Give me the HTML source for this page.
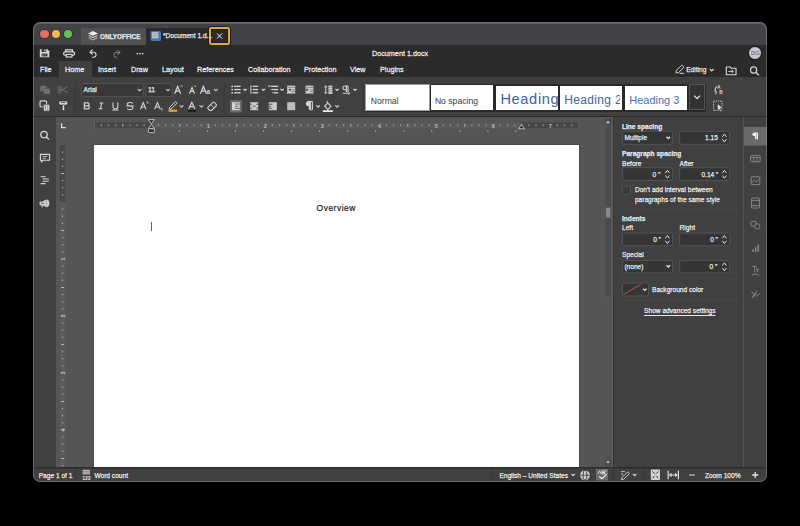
<!DOCTYPE html>
<html><head><meta charset="utf-8">
<style>
*{box-sizing:border-box;margin:0;padding:0}
html,body{width:800px;height:526px;background:#000;overflow:hidden;font-family:"Liberation Sans",sans-serif;}
.a{position:absolute}
#win{position:absolute;left:0;top:0;width:800px;height:526px;clip-path:inset(22px 33px 44px 33px round 7px);}
.t{position:absolute;z-index:2;white-space:nowrap;color:rgba(255,255,255,0.86);line-height:1;-webkit-text-stroke:0.25px currentColor}
.m{font-size:7.9px;transform:scaleX(0.915);transform-origin:0 0;-webkit-text-stroke:0.3px currentColor}
.s{font-size:6.6px;}
.b{font-weight:bold}
.q{word-spacing:-0.2px}
svg{position:absolute;overflow:visible}
</style></head><body>
<div id="win">
  <!-- tab bar -->
  <div class="a" style="left:33px;top:22px;width:734px;height:23px;background:#434247"></div>
  <div class="a" style="left:40.2px;top:29.8px;width:8.4px;height:8.4px;border-radius:50%;background:#ec6a5e;box-shadow:0 0 0 0.6px #1d2b33"></div>
  <div class="a" style="left:52px;top:29.8px;width:8.4px;height:8.4px;border-radius:50%;background:#f4b94a;box-shadow:0 0 0 0.6px #1d2b3a"></div>
  <div class="a" style="left:64.1px;top:29.8px;width:8.4px;height:8.4px;border-radius:50%;background:#5fc653;box-shadow:0 0 0 0.6px #2a1d33"></div>
  <div class="a" style="left:81px;top:28px;width:65px;height:17px;background:#515153"></div>
  <div class="t" style="left:99.8px;top:32.6px;font-size:7.2px;font-weight:bold;color:#e8e8e8;transform:scaleX(0.885);transform-origin:0 0">ONLYOFFICE</div>
  <div class="a" style="left:146px;top:28px;width:85px;height:17px;background:#2b2b2b"></div>
  <div class="a" style="left:151px;top:31px;width:9.5px;height:9.5px;background:#4a78b8;border-radius:1.5px"></div>
  <div class="a" style="left:152.5px;top:32.5px;width:6.5px;height:5.5px;background:#cfcfcf"></div>
  <div class="t s" style="left:163px;top:32.8px;color:#e6e6e6">*Document 1.d...</div>
  <div class="a" style="left:209.2px;top:27.1px;width:20.7px;height:17.6px;border:2px solid #e9a83c;border-radius:2.2px;background:#2a2a2a;box-shadow:0 0 0 0.8px #101a30, inset 0 0 0 0.8px #101a30"></div>

  <!-- title row + menu row -->
  <div class="a" style="left:33px;top:45px;width:734px;height:32px;background:#2b2b2b"></div>
  <div class="t m" style="left:372.3px;top:49.5px">Document 1.docx</div>
  <div class="a" style="left:747.8px;top:46px;width:14.4px;height:14.4px;border-radius:50%;background:#c8c8c8;border:0.9px solid #141414"></div>
  <div class="t" style="left:751px;top:50.9px;font-size:5.8px;color:#5e5e5e;-webkit-text-stroke:0">DG</div>

  <div class="a" style="left:59px;top:61.4px;width:33px;height:15.6px;background:#404040"></div>
  <div class="t m" style="left:40px;top:66.1px">File</div>
  <div class="t m" style="left:65px;top:66.1px">Home</div>
  <div class="t m" style="left:98px;top:66.1px">Insert</div>
  <div class="t m" style="left:131px;top:66.1px">Draw</div>
  <div class="t m" style="left:161.5px;top:66.1px">Layout</div>
  <div class="t m" style="left:197px;top:66.1px">References</div>
  <div class="t m" style="left:248px;top:66.1px">Collaboration</div>
  <div class="t m" style="left:304px;top:66.1px">Protection</div>
  <div class="t m" style="left:350px;top:66.1px">View</div>
  <div class="t m" style="left:380px;top:66.1px">Plugins</div>
  <div class="t s" style="left:686.2px;top:66.8px">Editing</div>

  <!-- toolbar -->
  <div class="a" style="left:33px;top:77px;width:734px;height:40px;background:#404040"></div>
  <div class="a" style="left:33px;top:116.4px;width:734px;height:0.8px;background:#2a2a2a"></div>


  <div class="t s" style="left:83.6px;top:86.8px;color:#e4e4e4">Arial</div>
  <div class="t" style="left:148px;top:86.2px;font-size:7px;color:#e4e4e4">11</div>
  <!-- style gallery -->
  <div class="a" style="left:364.5px;top:84px;width:341px;height:27.6px;background:#2a2a2a"></div>
  <div class="a" style="left:365px;top:84.4px;width:64.6px;height:27px;background:#fff;border:1.2px solid #9a9a9a"></div>
  <div class="a" style="left:430.6px;top:85.3px;width:62.8px;height:24.8px;background:#fff"></div>
  <div class="a" style="left:495.6px;top:86.1px;width:62.3px;height:24px;background:#fff;overflow:hidden"><div class="t" style="left:4.8px;top:6px;font-size:14.6px;letter-spacing:0.65px;color:#3d63a6;-webkit-text-stroke:0">Heading 1</div></div>
  <div class="a" style="left:560.4px;top:86.1px;width:61.7px;height:24px;background:#fff"></div><div class="a" style="left:560.4px;top:86.1px;width:59.4px;height:24px;overflow:hidden"><div class="t" style="left:3.8px;top:8.2px;font-size:12px;letter-spacing:0.36px;color:#3d63a6;-webkit-text-stroke:0">Heading 2</div></div>
  <div class="a" style="left:624.8px;top:85.5px;width:62px;height:24.3px;background:#fff;overflow:hidden"><div class="t" style="left:4.5px;top:9px;font-size:10.96px;color:#4470b4;-webkit-text-stroke:0">Heading 3</div></div>
  <div class="a" style="left:689px;top:84.3px;width:16.2px;height:26px;background:#333;border:0.8px solid #555"></div>
  <div class="t" style="left:370.8px;top:97.2px;font-size:8.6px;color:#3a3a3a;-webkit-text-stroke:0">Normal</div>
  <div class="t" style="left:434.9px;top:97.2px;font-size:8.64px;color:#3a3a3a;-webkit-text-stroke:0">No spacing</div>
  <!-- left panel -->
  <div class="a" style="left:33px;top:117px;width:23px;height:350px;background:#404040"></div>
  <!-- canvas -->
  <div class="a" style="left:56px;top:117px;width:557px;height:350px;background:#555"></div>
  <div class="a" style="left:94px;top:145px;width:485px;height:322px;background:#fff;box-shadow:0 0 0 0.8px #4a4a4a"></div>
  <div class="t" style="left:316.6px;top:203.8px;font-size:8.4px;color:#1a1a1a;-webkit-text-stroke:0.2px #1a1a1a;letter-spacing:0.55px">Overview</div>
  <div class="a" style="left:151px;top:222px;width:1.4px;height:9px;background:#666"></div>

  <!-- right panel -->
  <div class="a" style="left:613px;top:117px;width:131px;height:350px;background:#404040"></div>
  <div class="a" style="left:744px;top:117px;width:23px;height:350px;background:#404040"></div>


  <!-- right panel texts -->
  <div class="t s b" style="left:621.9px;top:124.0px">Line spacing</div>
  <div class="t s" style="left:624.4px;top:135.2px">Multiple</div>
  <div class="t s" style="left:705px;top:135.2px">1.15</div>
  <div class="t s b" style="left:622px;top:151.0px">Paragraph spacing</div>
  <div class="t s" style="left:622px;top:160.6px">Before</div>
  <div class="t s" style="left:679.6px;top:160.6px">After</div>
  <div class="t s q" style="left:652.6px;top:171.8px">0 "</div>
  <div class="t s q" style="left:701.4px;top:171.8px">0.14 "</div>
  <div class="t s" style="left:634.9px;top:187.4px">Don't add interval between</div>
  <div class="t s" style="left:634.9px;top:197.2px">paragraphs of the same style</div>
  <div class="t s b" style="left:622px;top:216.2px">Indents</div>
  <div class="t s" style="left:622px;top:225.4px">Left</div>
  <div class="t s" style="left:679.6px;top:225.4px">Right</div>
  <div class="t s q" style="left:653.2px;top:237.2px">0 "</div>
  <div class="t s q" style="left:710.2px;top:237.2px">0 "</div>
  <div class="t s" style="left:622px;top:252.0px">Special</div>
  <div class="t s" style="left:624.4px;top:264.4px">(none)</div>
  <div class="t s q" style="left:709.6px;top:264.4px">0 "</div>
  <div class="t s" style="left:652px;top:287.4px">Background color</div>
  <div class="t s" style="left:644.1px;top:308.2px;text-decoration:underline;text-underline-offset:2px">Show advanced settings</div>
  <!-- status bar -->
  <div class="a" style="left:33px;top:467px;width:734px;height:15px;background:#404040"></div>
  <div class="t s" style="left:38.7px;top:472.7px">Page 1 of 1</div>
  <div class="t s" style="left:94.4px;top:472.7px">Word count</div>
  <div class="t s" style="left:499.4px;top:472.7px">English – United States</div>
  <div class="t s" style="left:705px;top:472.7px">Zoom 100%</div>

<svg class="a" style="left:0;top:0;z-index:1" width="800" height="526" viewBox="0 0 800 526">
<g id="tabicons">
  <path d="M93 31 L98 33.4 L93 35.8 L88 33.4Z" fill="#ececec"/>
  <path d="M89.2 35.2 L93 37 L96.8 35.2 L98 35.8 L93 38.2 L88 35.8Z" fill="#d0d0d0"/>
  <path d="M89.2 37.6 L93 39.4 L96.8 37.6 L98 38.1 L93 40.5 L88 38.1Z" fill="#b8b8b8"/>
  <rect x="150.6" y="31" width="9" height="9.5" rx="1.2" fill="#3f74c0"/>
  <rect x="151.8" y="32.2" width="6.6" height="6.2" fill="#c9c9c9"/>
  <path d="M152.3 33.8H157.9M152.3 35.3H157.9M152.3 36.8H157.9" stroke="#8a8a8a" stroke-width="0.5"/>
  <path d="M217 33.4L222.1 38.5M222.1 33.4L217 38.5" stroke="#f4f4f4" stroke-width="0.95"/>
</g>
<g id="titleicons" fill="none" stroke="#dcdcdc">
  <path d="M39.8 49.3H47.3L49.3 51.3V57.2H39.8Z" fill="#d8d8d8" stroke="none"/>
  <rect x="41.6" y="49.3" width="4.6" height="2.6" fill="#2b2b2b" stroke="none"/>
  <rect x="44.3" y="49.8" width="1.2" height="1.7" fill="#d8d8d8" stroke="none"/>
  <rect x="41.6" y="53.6" width="5.8" height="2.8" fill="#2b2b2b" stroke="none"/>
  <rect x="42.4" y="54.4" width="1" height="1.1" fill="#d8d8d8" stroke="none"/>
  <rect x="44.6" y="54.4" width="1" height="1.1" fill="#d8d8d8" stroke="none"/>
  <path d="M65.5 52V49.9H72.5V52" stroke-width="1.1"/>
  <rect x="63.6" y="51.8" width="11" height="3.6" rx="1.8" stroke-width="1.2"/>
  <rect x="66.2" y="54.4" width="5.8" height="2.6" stroke-width="1.1" fill="#2d2d2d"/>
  <path d="M92.6 49.7L90 52.2L92.6 54.6" stroke-width="1.1"/>
  <path d="M90.2 52.2H94.2A2.6 2.6 0 0 1 94.2 57.2H92.2" stroke-width="1.1"/>
  <path d="M117.3 49.9L119.9 52.4L117.3 54.9" stroke="#7a7a7a" stroke-width="1.1"/>
  <path d="M119.6 52.4H115.6A2.6 2.6 0 0 0 115.6 57.3H117.2" stroke="#7a7a7a" stroke-width="1.1"/>
  <circle cx="137.4" cy="53.6" r="0.85" fill="#d8d8d8" stroke="none"/>
  <circle cx="140" cy="53.6" r="0.85" fill="#d8d8d8" stroke="none"/>
  <circle cx="142.6" cy="53.6" r="0.85" fill="#d8d8d8" stroke="none"/>
</g>
<g id="menuicons" fill="none" stroke="#d8d8d8" stroke-width="1">
  <path d="M676 72.8L676.4 70.4L681.2 65.6A1 1 0 0 1 682.6 65.6L683.4 66.4A1 1 0 0 1 683.4 67.8L678.6 72.6Z"/>
  <path d="M679.5 73.3H684" />
  <path d="M709.8 69L711.7 70.9L713.6 69" stroke-width="1.1"/>
  <path d="M726.3 67H730.2L731.2 68.2H736V74.7H726.3Z" stroke-width="1.1"/>
  <path d="M728.4 71.4H733.2M731.6 69.8L733.3 71.4L731.6 73" stroke-width="1"/>
  <circle cx="753.6" cy="70" r="3.1" stroke-width="1.2"/>
  <path d="M755.9 72.3L758.9 75.2" stroke-width="1.3"/>
</g>

<g id="toolbar" fill="none" stroke="#d4d4d4" stroke-width="1">
  <!-- separators -->
  <path d="M75 83V113M224 83V113M363 83V113" stroke="#363636" stroke-width="0.8"/>
  <!-- copy (dim) -->
  <rect x="40.2" y="85.8" width="6.4" height="5.6" rx="1.2" fill="#6e6e6e" stroke="none"/>
  <rect x="43.4" y="88.4" width="6.6" height="5.8" rx="1.2" fill="#7a7a7a" stroke="#404040" stroke-width="0.6"/>
  <path d="M45.6 89.5V93.2M47.8 89.5V93.2" stroke="#5a5a5a" stroke-width="0.6"/>
  <!-- cut (dim) -->
  <circle cx="59.6" cy="87.8" r="1.5" stroke="#7c7c7c" stroke-width="0.8"/>
  <circle cx="59.6" cy="91.6" r="1.5" stroke="#7c7c7c" stroke-width="0.8"/>
  <path d="M60.9 88.6L67.6 92.8M60.9 90.8L67.6 86.4" stroke="#7c7c7c" stroke-width="0.8"/>
  <!-- paste -->
  <rect x="40" y="100.8" width="6.6" height="6.2" rx="1.4" stroke="#d4d4d4" stroke-width="1.2" fill="#404040"/>
  <rect x="43.3" y="104.2" width="6.6" height="7" rx="1.2" fill="#cfcfcf" stroke="#1e1e1e" stroke-width="0.6"/>
  <path d="M45.5 105.4V110M47.7 105.4V110" stroke="#7a7a7a" stroke-width="0.6"/>
  <!-- format painter -->
  <rect x="58.8" y="100.9" width="9" height="4.2" rx="2" fill="#d6d6d6" stroke="#1e1e1e" stroke-width="0.5"/>
  <path d="M61 102.4H65.6" stroke="#333" stroke-width="0.8"/>
  <rect x="62.3" y="105" width="2.2" height="5.4" fill="#e0e0e0" stroke="#1e1e1e" stroke-width="0.4"/>
  <!-- font combos -->
  <rect x="81.4" y="83.5" width="62" height="13" rx="1.8" fill="#383838" stroke="#575757" stroke-width="0.8"/>
  <path d="M137.8 89.1L139.6 90.8L141.4 89.1" stroke-width="1.1"/>
  <rect x="145.8" y="83.5" width="26.2" height="13" rx="1.8" fill="#383838" stroke="#575757" stroke-width="0.8"/>
  <path d="M166.2 89.1L168 90.8L169.8 89.1" stroke-width="1.1"/>
  <!-- grow/shrink font -->
  <path d="M174.6 93.8L177.6 86.4L180.6 93.8M175.8 91.2H179.4" stroke-width="1.2"/>
  <path d="M180.4 86.6L181.4 85.4L182.4 86.6" stroke-width="0.8"/>
  <path d="M189.4 93.8L192 87.4L194.6 93.8M190.4 91.4H193.6" stroke-width="1.1"/>
  <path d="M194.2 85.6L195.2 86.8L196.2 85.6" stroke-width="0.8"/>
  <!-- change case -->
  <path d="M200.4 93.8L203.4 86.4L206.4 93.8M201.6 91.2H205.2" stroke-width="1.2"/>
  <text x="206.6" y="93.8" font-size="6.4" font-family="Liberation Sans" font-weight="bold" fill="#d4d4d4" stroke="none">a</text>
  <path d="M214.2 89.1L215.9 90.8L217.6 89.1" stroke-width="1.1"/>
  <!-- row 2 -->
  <path d="M84.4 102.8H87.4A1.6 1.5 0 0 1 87.4 105.8H84.4ZM84.4 105.8H87.8A1.6 1.55 0 0 1 87.8 108.9H84.4Z" stroke-width="1.2"/>
  <path d="M99.4 103H103.4M98.6 108.8H102.6M101.6 103L100.4 108.8" stroke-width="1.1"/>
  <path d="M113 102.6V106.4A2.4 2.4 0 0 0 117.8 106.4V102.6M112.2 110H118.6" stroke-width="1.1"/>
  <path d="M132.8 103.6A2.6 1.4 0 0 0 127.4 104.4C127.4 106.2 132.8 105.6 132.8 107.6A2.6 1.4 0 0 1 127.2 108.4M126.2 106H134" stroke-width="1.05"/>
  <path d="M140.4 109.2L143.2 102.6L146 109.2M141.4 107H145" stroke-width="1.1"/>
  <path d="M146.4 101.8H147.8V104" stroke-width="0.7"/>
  <path d="M154.6 109.2L157.4 102.6L160.2 109.2M155.6 107H159.2" stroke-width="1.1"/>
  <path d="M160.6 108.4H162V111" stroke-width="0.7"/>
  <!-- highlight -->
  <path d="M169.4 107.6L175.4 101.6L177 103.2L171 109.2H169.4Z" stroke-width="1"/>
  <rect x="168.6" y="109.6" width="8.4" height="2.2" fill="#e2a73b" stroke="none"/>
  <path d="M179.8 105.4L181.6 107.1L183.4 105.4" stroke-width="1.1"/>
  <!-- font color -->
  <path d="M188.6 109L191.8 102.4L195 109M189.8 106.6H193.8" stroke-width="1.15"/>
  <rect x="188" y="110.2" width="8" height="1.4" fill="#111" stroke="none"/>
  <path d="M199.6 105.4L201.4 107.1L203.2 105.4" stroke-width="1.1"/>
  <!-- eraser -->
  <path d="M207.8 107.4L212.8 102.4A1 1 0 0 1 214.2 102.4L216.2 104.4A1 1 0 0 1 216.2 105.8L211.6 110.4H209.8L207.8 108.4Z" stroke-width="1.05"/>
  <path d="M210.8 104.6L213.8 107.6" stroke-width="0.9"/>
  <!-- lists -->
  <g fill="#d6d6d6" stroke="none">
    <circle cx="232.2" cy="86.4" r="0.9"/><circle cx="232.2" cy="89.6" r="0.9"/><circle cx="232.2" cy="92.8" r="0.9"/>
    <rect x="234.2" y="85.7" width="6.4" height="1.3"/><rect x="234.2" y="88.9" width="6.4" height="1.3"/><rect x="234.2" y="92.1" width="6.4" height="1.3"/>
    <rect x="250.4" y="85.2" width="1" height="8.6"/>
    <rect x="252.6" y="85.7" width="5.6" height="1.3"/><rect x="252.6" y="88.9" width="5.6" height="1.3"/><rect x="252.6" y="92.1" width="5.6" height="1.3"/>
    <rect x="268.6" y="85" width="1" height="2.2"/>
    <rect x="270.6" y="85.7" width="7.6" height="1.3"/><rect x="272.2" y="88.9" width="6" height="1.3"/><rect x="273.6" y="92.1" width="4.6" height="1.3"/>
    <rect x="270.8" y="89" width="1" height="1"/><rect x="272.2" y="92.2" width="1" height="1"/>
  </g>
  <path d="M243.4 88.8L245.1 90.5L246.8 88.8M261.8 88.8L263.5 90.5L265.2 88.8M280.4 88.8L282.1 90.5L283.8 88.8" stroke-width="1.1"/>
  <!-- indents -->
  <rect x="287.2" y="85.6" width="8" height="8.4" fill="#cdcdcd" stroke="none"/>
  <path d="M288 87.4H295M291.4 89.7H295M291.4 91.6H295M288 93.5H295" stroke="#4a4a4a" stroke-width="0.5"/>
  <path d="M290.6 88.4L288.2 89.8L290.6 91.2Z" fill="#333" stroke="none"/>
  <rect x="305.6" y="85.6" width="7.8" height="8.4" fill="#cdcdcd" stroke="none"/>
  <path d="M306.4 87.4H313.2M309.8 89.7H313.2M309.8 91.6H313.2M306.4 93.5H313.2" stroke="#4a4a4a" stroke-width="0.5"/>
  <path d="M306.4 88.4L308.8 89.8L306.4 91.2Z" fill="#333" stroke="none"/>
  <!-- line spacing -->
  <path d="M325.8 85.8V93.8M324.4 87.2L325.8 85.8L327.2 87.2M324.4 92.4L325.8 93.8L327.2 92.4" stroke-width="1"/>
  <rect x="328.4" y="85.6" width="4" height="8.4" fill="#cdcdcd" stroke="none"/>
  <path d="M328.4 87.4H332.4M328.4 89.7H332.4M328.4 91.8H332.4" stroke="#555" stroke-width="0.5"/>
  <path d="M335.4 88.8L337.1 90.5L338.8 88.8" stroke-width="1.1"/>
  <!-- paragraph spacing -->
  <path d="M348 86H344.8A1.9 1.9 0 0 0 344.8 89.8H346M346.4 86V92.2M348 86V92.2" stroke-width="1.1"/>
  <path d="M342.6 93.3H349.2M348.2 91.8L349.8 93.3L348.2 94.8" stroke-width="0.9"/>
  <path d="M353.4 88.8L355.1 90.5L356.8 88.8" stroke-width="1.1"/>
  <!-- align -->
  <rect x="230" y="100" width="11.8" height="12.4" rx="1" fill="#6a6a6a" stroke="none"/>
  <rect x="232" y="102.2" width="7.8" height="8" fill="#d0d0d0" stroke="none"/>
  <path d="M235 104H239.8M235 106.2H238.2M235 108.4H239.8" stroke="#444" stroke-width="0.7"/>
  <rect x="250.2" y="102.2" width="8" height="8" fill="#cbcbcb" stroke="none"/>
  <path d="M250.2 104.2H252.2M256.2 104.2H258.2M250.2 108.2H252.2M256.2 108.2H258.2M252.8 106.2H255.6" stroke="#3a3a3a" stroke-width="0.8"/>
  <rect x="268.8" y="102.2" width="8" height="8" fill="#cbcbcb" stroke="none"/>
  <path d="M268.8 104.2H272.4M268.8 106.2H271M268.8 108.2H272.4" stroke="#3a3a3a" stroke-width="0.8"/>
  <rect x="287.2" y="102.2" width="8" height="8" fill="#bdbdbd" stroke="none"/>
  <!-- pilcrow -->
  <path d="M307.4 101.4H312.4V109.8H310.6V101.4" fill="none" stroke-width="1"/>
  <path d="M309.8 101.4H308.2A2.4 2.4 0 0 0 308.2 106.2H309.8Z" fill="#d4d4d4" stroke="none"/>
  <rect x="308.8" y="101.4" width="1.4" height="8.4" fill="#d4d4d4" stroke="none"/>
  <path d="M316.4 105.4L318.1 107.1L319.8 105.4" stroke-width="1.1"/>
  <!-- shading -->
  <path d="M324.6 106.2L327.8 103L331 106.2L327.8 109.4Z" stroke-width="1.1"/>
  <path d="M326 102.2L328 101.4" stroke-width="0.9"/>
  <rect x="322.8" y="110.2" width="10" height="1.8" fill="#e8e8e8" stroke="none"/>
  <path d="M335.4 105.4L337.1 107.1L338.8 105.4" stroke-width="1.1"/>
</g>
<g id="hruler">
<rect x="94.5" y="122.4" width="483.5" height="5.8" fill="#5a5a5a"/>
<rect x="94.2" y="122.4" width="0.8" height="5.8" fill="#8a8a8a"/>
<rect x="94.5" y="122.4" width="56.80" height="5.8" fill="#474747"/>
<rect x="521.8" y="122.4" width="56.20" height="5.8" fill="#474747"/>
<rect x="100.73" y="124.6" width="1.3" height="1.3" fill="#a8a8a8"/>
<rect x="107.85" y="124.6" width="1.3" height="1.3" fill="#a8a8a8"/>
<rect x="114.98" y="124.6" width="1.3" height="1.3" fill="#a8a8a8"/>
<rect x="122.30" y="123.9" width="1" height="2.8" fill="#b8b8b8"/>
<rect x="129.23" y="124.6" width="1.3" height="1.3" fill="#a8a8a8"/>
<rect x="136.35" y="124.6" width="1.3" height="1.3" fill="#a8a8a8"/>
<rect x="143.48" y="124.6" width="1.3" height="1.3" fill="#a8a8a8"/>
<rect x="157.73" y="124.6" width="1.3" height="1.3" fill="#a8a8a8"/>
<rect x="164.85" y="124.6" width="1.3" height="1.3" fill="#a8a8a8"/>
<rect x="171.98" y="124.6" width="1.3" height="1.3" fill="#a8a8a8"/>
<rect x="179.30" y="123.9" width="1" height="2.8" fill="#b8b8b8"/>
<rect x="186.23" y="124.6" width="1.3" height="1.3" fill="#a8a8a8"/>
<rect x="193.35" y="124.6" width="1.3" height="1.3" fill="#a8a8a8"/>
<rect x="200.48" y="124.6" width="1.3" height="1.3" fill="#a8a8a8"/>
<text x="208.30" y="127.6" font-size="5.6" fill="#bdbdbd" text-anchor="middle" font-family="Liberation Sans" font-weight="bold">1</text>
<rect x="214.73" y="124.6" width="1.3" height="1.3" fill="#a8a8a8"/>
<rect x="221.85" y="124.6" width="1.3" height="1.3" fill="#a8a8a8"/>
<rect x="228.98" y="124.6" width="1.3" height="1.3" fill="#a8a8a8"/>
<rect x="236.30" y="123.9" width="1" height="2.8" fill="#b8b8b8"/>
<rect x="243.23" y="124.6" width="1.3" height="1.3" fill="#a8a8a8"/>
<rect x="250.35" y="124.6" width="1.3" height="1.3" fill="#a8a8a8"/>
<rect x="257.48" y="124.6" width="1.3" height="1.3" fill="#a8a8a8"/>
<text x="265.30" y="127.6" font-size="5.6" fill="#bdbdbd" text-anchor="middle" font-family="Liberation Sans" font-weight="bold">2</text>
<rect x="271.73" y="124.6" width="1.3" height="1.3" fill="#a8a8a8"/>
<rect x="278.85" y="124.6" width="1.3" height="1.3" fill="#a8a8a8"/>
<rect x="285.98" y="124.6" width="1.3" height="1.3" fill="#a8a8a8"/>
<rect x="293.30" y="123.9" width="1" height="2.8" fill="#b8b8b8"/>
<rect x="300.23" y="124.6" width="1.3" height="1.3" fill="#a8a8a8"/>
<rect x="307.35" y="124.6" width="1.3" height="1.3" fill="#a8a8a8"/>
<rect x="314.48" y="124.6" width="1.3" height="1.3" fill="#a8a8a8"/>
<text x="322.30" y="127.6" font-size="5.6" fill="#bdbdbd" text-anchor="middle" font-family="Liberation Sans" font-weight="bold">3</text>
<rect x="328.73" y="124.6" width="1.3" height="1.3" fill="#a8a8a8"/>
<rect x="335.85" y="124.6" width="1.3" height="1.3" fill="#a8a8a8"/>
<rect x="342.98" y="124.6" width="1.3" height="1.3" fill="#a8a8a8"/>
<rect x="350.30" y="123.9" width="1" height="2.8" fill="#b8b8b8"/>
<rect x="357.23" y="124.6" width="1.3" height="1.3" fill="#a8a8a8"/>
<rect x="364.35" y="124.6" width="1.3" height="1.3" fill="#a8a8a8"/>
<rect x="371.48" y="124.6" width="1.3" height="1.3" fill="#a8a8a8"/>
<text x="379.30" y="127.6" font-size="5.6" fill="#bdbdbd" text-anchor="middle" font-family="Liberation Sans" font-weight="bold">4</text>
<rect x="385.73" y="124.6" width="1.3" height="1.3" fill="#a8a8a8"/>
<rect x="392.85" y="124.6" width="1.3" height="1.3" fill="#a8a8a8"/>
<rect x="399.98" y="124.6" width="1.3" height="1.3" fill="#a8a8a8"/>
<rect x="407.30" y="123.9" width="1" height="2.8" fill="#b8b8b8"/>
<rect x="414.23" y="124.6" width="1.3" height="1.3" fill="#a8a8a8"/>
<rect x="421.35" y="124.6" width="1.3" height="1.3" fill="#a8a8a8"/>
<rect x="428.48" y="124.6" width="1.3" height="1.3" fill="#a8a8a8"/>
<text x="436.30" y="127.6" font-size="5.6" fill="#bdbdbd" text-anchor="middle" font-family="Liberation Sans" font-weight="bold">5</text>
<rect x="442.73" y="124.6" width="1.3" height="1.3" fill="#a8a8a8"/>
<rect x="449.85" y="124.6" width="1.3" height="1.3" fill="#a8a8a8"/>
<rect x="456.98" y="124.6" width="1.3" height="1.3" fill="#a8a8a8"/>
<rect x="464.30" y="123.9" width="1" height="2.8" fill="#b8b8b8"/>
<rect x="471.23" y="124.6" width="1.3" height="1.3" fill="#a8a8a8"/>
<rect x="478.35" y="124.6" width="1.3" height="1.3" fill="#a8a8a8"/>
<rect x="485.48" y="124.6" width="1.3" height="1.3" fill="#a8a8a8"/>
<text x="493.30" y="127.6" font-size="5.6" fill="#bdbdbd" text-anchor="middle" font-family="Liberation Sans" font-weight="bold">6</text>
<rect x="499.73" y="124.6" width="1.3" height="1.3" fill="#a8a8a8"/>
<rect x="506.85" y="124.6" width="1.3" height="1.3" fill="#a8a8a8"/>
<rect x="513.97" y="124.6" width="1.3" height="1.3" fill="#a8a8a8"/>
<rect x="521.30" y="123.9" width="1" height="2.8" fill="#b8b8b8"/>
<rect x="528.22" y="124.6" width="1.3" height="1.3" fill="#a8a8a8"/>
<rect x="535.35" y="124.6" width="1.3" height="1.3" fill="#a8a8a8"/>
<rect x="542.47" y="124.6" width="1.3" height="1.3" fill="#a8a8a8"/>
<text x="550.30" y="127.6" font-size="5.6" fill="#bdbdbd" text-anchor="middle" font-family="Liberation Sans" font-weight="bold">7</text>
<rect x="556.72" y="124.6" width="1.3" height="1.3" fill="#a8a8a8"/>
<rect x="563.85" y="124.6" width="1.3" height="1.3" fill="#a8a8a8"/>
<rect x="570.97" y="124.6" width="1.3" height="1.3" fill="#a8a8a8"/>
<rect x="178.85" y="130.4" width="1" height="1.6" fill="#b0b0b0"/>
<rect x="206.90" y="130.4" width="1" height="1.6" fill="#b0b0b0"/>
<rect x="234.95" y="130.4" width="1" height="1.6" fill="#b0b0b0"/>
<rect x="263.00" y="130.4" width="1" height="1.6" fill="#b0b0b0"/>
<rect x="291.05" y="130.4" width="1" height="1.6" fill="#b0b0b0"/>
<rect x="319.10" y="130.4" width="1" height="1.6" fill="#b0b0b0"/>
<rect x="347.15" y="130.4" width="1" height="1.6" fill="#b0b0b0"/>
<rect x="375.20" y="130.4" width="1" height="1.6" fill="#b0b0b0"/>
<rect x="403.25" y="130.4" width="1" height="1.6" fill="#b0b0b0"/>
<rect x="431.30" y="130.4" width="1" height="1.6" fill="#b0b0b0"/>
<rect x="459.35" y="130.4" width="1" height="1.6" fill="#b0b0b0"/>
<rect x="487.40" y="130.4" width="1" height="1.6" fill="#b0b0b0"/>
<rect x="515.45" y="130.4" width="1" height="1.6" fill="#b0b0b0"/>
<path d="M148.4 119.6H154.4L151.4 123.8Z" fill="#2e2e2e" stroke="#c4c4c4" stroke-width="0.9"/>
<path d="M151.4 124.6L154.4 128.4H148.4Z" fill="#2e2e2e" stroke="#c4c4c4" stroke-width="0.9"/>
<rect x="148.4" y="128.8" width="6" height="3.8" rx="0.6" fill="#2e2e2e" stroke="#c4c4c4" stroke-width="0.9"/>
<path d="M521.6 124.6L524.6 128.8H518.6Z" fill="#2e2e2e" stroke="#c4c4c4" stroke-width="0.9"/>
<path d="M61 123.2V128.2H65.6V127H62.2V123.2Z" fill="#e0e0e0"/>
</g>
<g id="vruler">
<rect x="59.8" y="145.3" width="5.6" height="321.7" fill="#5a5a5a"/>
<rect x="59.8" y="145.3" width="5.6" height="56.70" fill="#474747"/>
<rect x="61.9" y="151.42" width="1.3" height="1.3" fill="#a8a8a8"/>
<rect x="61.9" y="158.55" width="1.3" height="1.3" fill="#a8a8a8"/>
<rect x="61.9" y="165.68" width="1.3" height="1.3" fill="#a8a8a8"/>
<rect x="61.2" y="173.00" width="2.8" height="1" fill="#b8b8b8"/>
<rect x="61.9" y="179.92" width="1.3" height="1.3" fill="#a8a8a8"/>
<rect x="61.9" y="187.05" width="1.3" height="1.3" fill="#a8a8a8"/>
<rect x="61.9" y="194.18" width="1.3" height="1.3" fill="#a8a8a8"/>
<rect x="61.9" y="208.42" width="1.3" height="1.3" fill="#a8a8a8"/>
<rect x="61.9" y="215.55" width="1.3" height="1.3" fill="#a8a8a8"/>
<rect x="61.9" y="222.68" width="1.3" height="1.3" fill="#a8a8a8"/>
<rect x="61.2" y="230.00" width="2.8" height="1" fill="#b8b8b8"/>
<rect x="61.9" y="236.92" width="1.3" height="1.3" fill="#a8a8a8"/>
<rect x="61.9" y="244.05" width="1.3" height="1.3" fill="#a8a8a8"/>
<rect x="61.9" y="251.18" width="1.3" height="1.3" fill="#a8a8a8"/>
<text transform="translate(62.6 259.00) rotate(-90)" font-size="5.5" fill="#c8c8c8" text-anchor="middle" dy="2" font-family="Liberation Sans" font-weight="bold">1</text>
<rect x="61.9" y="265.42" width="1.3" height="1.3" fill="#a8a8a8"/>
<rect x="61.9" y="272.55" width="1.3" height="1.3" fill="#a8a8a8"/>
<rect x="61.9" y="279.68" width="1.3" height="1.3" fill="#a8a8a8"/>
<rect x="61.2" y="287.00" width="2.8" height="1" fill="#b8b8b8"/>
<rect x="61.9" y="293.92" width="1.3" height="1.3" fill="#a8a8a8"/>
<rect x="61.9" y="301.05" width="1.3" height="1.3" fill="#a8a8a8"/>
<rect x="61.9" y="308.18" width="1.3" height="1.3" fill="#a8a8a8"/>
<text transform="translate(62.6 316.00) rotate(-90)" font-size="5.5" fill="#c8c8c8" text-anchor="middle" dy="2" font-family="Liberation Sans" font-weight="bold">2</text>
<rect x="61.9" y="322.42" width="1.3" height="1.3" fill="#a8a8a8"/>
<rect x="61.9" y="329.55" width="1.3" height="1.3" fill="#a8a8a8"/>
<rect x="61.9" y="336.68" width="1.3" height="1.3" fill="#a8a8a8"/>
<rect x="61.2" y="344.00" width="2.8" height="1" fill="#b8b8b8"/>
<rect x="61.9" y="350.92" width="1.3" height="1.3" fill="#a8a8a8"/>
<rect x="61.9" y="358.05" width="1.3" height="1.3" fill="#a8a8a8"/>
<rect x="61.9" y="365.18" width="1.3" height="1.3" fill="#a8a8a8"/>
<text transform="translate(62.6 373.00) rotate(-90)" font-size="5.5" fill="#c8c8c8" text-anchor="middle" dy="2" font-family="Liberation Sans" font-weight="bold">3</text>
<rect x="61.9" y="379.42" width="1.3" height="1.3" fill="#a8a8a8"/>
<rect x="61.9" y="386.55" width="1.3" height="1.3" fill="#a8a8a8"/>
<rect x="61.9" y="393.68" width="1.3" height="1.3" fill="#a8a8a8"/>
<rect x="61.2" y="401.00" width="2.8" height="1" fill="#b8b8b8"/>
<rect x="61.9" y="407.92" width="1.3" height="1.3" fill="#a8a8a8"/>
<rect x="61.9" y="415.05" width="1.3" height="1.3" fill="#a8a8a8"/>
<rect x="61.9" y="422.18" width="1.3" height="1.3" fill="#a8a8a8"/>
<text transform="translate(62.6 430.00) rotate(-90)" font-size="5.5" fill="#c8c8c8" text-anchor="middle" dy="2" font-family="Liberation Sans" font-weight="bold">4</text>
<rect x="61.9" y="436.42" width="1.3" height="1.3" fill="#a8a8a8"/>
<rect x="61.9" y="443.55" width="1.3" height="1.3" fill="#a8a8a8"/>
<rect x="61.9" y="450.68" width="1.3" height="1.3" fill="#a8a8a8"/>
<rect x="61.2" y="458.00" width="2.8" height="1" fill="#b8b8b8"/>
<rect x="61.9" y="464.92" width="1.3" height="1.3" fill="#a8a8a8"/>
</g>

<g id="leftpanel" fill="none" stroke="#d6d6d6">
  <circle cx="44" cy="134.6" r="3.2" stroke-width="1.3"/>
  <path d="M46.4 137L49 139.6" stroke-width="1.4"/>
  <path d="M40.4 154.4H49.6V160.2H43.4L41.4 162V160.2H40.4Z" stroke-width="1.1" stroke-linejoin="round"/>
  <path d="M42.6 156.4H47.4M42.6 158.2H45.8" stroke-width="0.8"/>
  <path d="M40.6 176.8H45.6M42.6 179H48.8M42.6 181.2H48.8M40.6 183.6H45.6" stroke-width="1.1"/>
  <path d="M39.6 201.4H42.2L46.4 199.4C48.6 199.4 49.4 201.4 49.4 203.3C49.4 205.3 48.6 207.3 46.4 207.3L42.2 205.3H39.6Z" fill="#d0d0d0" stroke="none"/>
  <path d="M41 203.3H44.2" stroke="#444" stroke-width="0.8"/>
  <path d="M46.4 199.8V206.9" stroke="#8a8a8a" stroke-width="0.6"/>
  <path d="M41.6 205.2L42.4 207.4" stroke-width="1.1"/>
</g>
<g id="scroll">
  <rect x="604.8" y="118.8" width="6.4" height="6.4" fill="#4a4a4a"/>
  <path d="M606 123.2L608 120.8L610 123.2Z" fill="#d0d0d0"/>
  <rect x="604.4" y="126.4" width="7.2" height="170" fill="#5a5a5a"/>
  <rect x="605.2" y="127" width="5.8" height="169" fill="#4b4b4b"/>
  <rect x="605.8" y="207.4" width="4.8" height="10.4" rx="0.6" fill="#8a8a8a" stroke="#555" stroke-width="0.5"/>
  <rect x="743" y="117" width="1" height="350" fill="#545454"/>
  <rect x="612.2" y="117" width="0.9" height="350" fill="#5e5e5e"/>
  <rect x="613.1" y="117" width="0.9" height="350" fill="#363636"/>
  <rect x="604.8" y="459.4" width="6.4" height="6.4" fill="#4a4a4a"/>
  <path d="M606 461.2L608 463.6L610 461.2Z" fill="#d0d0d0"/>
</g>
<g id="rightbar" fill="none" stroke="#8c8c8c" stroke-width="0.9">
  <rect x="744" y="127" width="22.8" height="18.4" fill="#6b6b6b" stroke="none"/>
  <path d="M755.4 132.4H758V139.2H756.6V132.4" fill="#f0f0f0" stroke="none"/>
  <path d="M755.6 132.4H754.4A1.9 1.9 0 0 0 754.4 136.2H755.6Z" fill="#f0f0f0" stroke="none"/>
  <rect x="755" y="132.4" width="1.2" height="6.8" fill="#f0f0f0" stroke="none"/>
  <rect x="750.6" y="155.4" width="9.6" height="6.4" rx="0.8"/>
  <path d="M750.6 157.4H760.2M753.8 157.4V161.8M757 157.4V161.8"/>
  <rect x="751.2" y="176.8" width="8.6" height="7.8" rx="0.8"/>
  <path d="M752.4 182.6L754.6 180.2L756.4 181.8L758.6 179.4"/>
  <rect x="751.6" y="198" width="7.8" height="10" rx="0.8"/>
  <path d="M751.6 200.4H759.4M751.6 205.6H759.4"/>
  <rect x="750.8" y="221.4" width="5.2" height="4.6" rx="0.6"/>
  <circle cx="757.2" cy="226.4" r="2.6" fill="#404040"/>
  <path d="M753 251.8V249.4M755.6 251.8V247.2M758.2 251.8V244.6" stroke-width="1.5"/>
  <path d="M752.2 266.4H757M754.6 266.4V272M756.2 269.2H759M757.6 269.2V272" stroke-width="0.9"/>
  <path d="M751.6 275.6Q755.4 272.4 759.2 275.6" stroke-width="0.9"/>
  <path d="M752 298L757 290.4M756 293.4L753.6 297M751.6 291.4L754.4 295.2M756.2 296.2Q758.6 294.2 760 293.6" stroke-width="0.9"/>
</g>
<g id="rightpanel" fill="none" stroke="#5a5a5a" stroke-width="0.8">
  <rect x="622.4" y="131.3" width="49.9" height="13" rx="1.6" fill="#353535"/>
  <rect x="679.6" y="131.3" width="50.1" height="13" rx="1.6" fill="#353535"/>
  <rect x="622.4" y="167.7" width="49.9" height="12.7" rx="1.6" fill="#353535"/>
  <rect x="679.6" y="167.7" width="50.1" height="12.7" rx="1.6" fill="#353535"/>
  <rect x="622.4" y="186.2" width="8.1" height="8.1" rx="1" fill="#383838"/>
  <path d="M622 209.7H736.5M622 278.4H736.5M622 300.6H736.5" stroke="#4a4a4a" stroke-width="0.7"/>
  <rect x="622.4" y="233.1" width="50.1" height="12.6" rx="1.6" fill="#353535"/>
  <rect x="679.7" y="233.1" width="50.1" height="12.6" rx="1.6" fill="#353535"/>
  <rect x="622.4" y="260.4" width="50.1" height="12.4" rx="1.6" fill="#353535"/>
  <rect x="679.7" y="260.4" width="50.1" height="12.4" rx="1.6" fill="#353535"/>
  <rect x="622.4" y="283" width="26.2" height="12.9" rx="1.6" fill="#353535"/>
  <path d="M623.6 294.4L640.6 284.6" stroke="#d9534f" stroke-width="0.9"/>
  <path d="M641.6 283.4V295.6" stroke="#4a4a4a" stroke-width="0.6"/>
  <g stroke="#dcdcdc" stroke-width="0.9">
    <path d="M666.5 136.8L668.3 138.6L670.1 136.8M643 288.6L644.8 290.4L646.6 288.6M666.5 265.2L668.3 267L670.1 265.2" stroke="#e4e4e4" stroke-width="1.3"/>
    <path d="M722.4 136.8L724.4 134.0L726.4 136.8M722.4 139.2L724.4 142.0L726.4 139.2M665.4 173.1L667.4 170.2L669.4 173.1M665.4 175.5L667.4 178.2L669.4 175.5M722.4 173.1L724.4 170.2L726.4 173.1M722.4 175.5L724.4 178.2L726.4 175.5M665.4 238.4L667.4 235.6L669.4 238.4M665.4 240.8L667.4 243.6L669.4 240.8M722.4 238.4L724.4 235.6L726.4 238.4M722.4 240.8L724.4 243.6L726.4 240.8M722.4 265.6L724.4 262.8L726.4 265.6M722.4 268.0L724.4 270.8L726.4 268.0" stroke-width="1"/>
  </g>
</g>
<g id="statusicons" fill="none" stroke="#d6d6d6" stroke-width="0.9">
  <rect x="33" y="467" width="734" height="1.5" fill="#2c2c2c" stroke="none"/>
  <path d="M76 468.5V481M491.8 468.5V481M613.5 468.5V481M644 468.5V481" stroke="#363636" stroke-width="0.9"/>
  <rect x="82.6" y="469.8" width="7.4" height="4.6" fill="#bdbdbd" stroke="none"/>
  <path d="M82.6 471.4H90M82.6 472.9H90" stroke="#5a5a5a" stroke-width="0.5"/>
  <text x="86.3" y="480.2" font-size="5" fill="#e8e8e8" stroke="none" text-anchor="middle" font-family="Liberation Sans" font-weight="bold">123</text>
  <path d="M571.3 473.8L573.1 475.6L574.9 473.8" stroke-width="1.2"/>
  <circle cx="585" cy="475.2" r="5.2" fill="#cfcfcf" stroke="none"/>
  <path d="M580 475.2H590" stroke="#3a3a3a" stroke-width="0.8"/>
  <ellipse cx="585" cy="475.2" rx="2" ry="5" stroke="#3a3a3a" stroke-width="0.9"/>
  <circle cx="585" cy="475.2" r="5.3" stroke="#222" stroke-width="0.5"/>
  <rect x="596" y="469" width="12" height="11.5" fill="#6b6b6b" stroke="none"/>
  <path d="M598 474L599.6 470.8L601.2 474M602 470.8V474M602 470.8H603.6A0.8 0.8 0 0 1 603.6 472.4H602M602 472.4H604A0.8 0.8 0 0 1 604 474H602M606.8 471.2A1.6 1.6 0 1 0 606.8 473.6" stroke="#e8e8e8" stroke-width="0.8"/>
  <path d="M599.2 476.4L601.8 478.6L606.4 474.6" stroke="#f2f2f2" stroke-width="1.2"/>
  <path d="M621.4 479.6L622 477.4L627.6 471.8L629.4 473.6L623.8 479.2Z" stroke-width="0.9"/>
  <path d="M621 471.6H625M621 474H623.4" stroke-width="0.8"/>
  <path d="M632.9 473.8L634.7 475.6L636.5 473.8" stroke-width="1.2"/>
  <rect x="650.8" y="469.6" width="9.2" height="10.4" rx="0.8" fill="#d2d2d2" stroke="none"/>
  <path d="M652.4 471.4L654.6 473.6M658.4 471.4L656.2 473.6M652.4 478.2L654.6 476M658.4 478.2L656.2 476" stroke="#333" stroke-width="1"/>
  <path d="M668.2 470.8V479.2M678.4 470.8V479.2M669.8 475H676.8M671.4 473.4L669.8 475L671.4 476.6M675.2 473.4L676.8 475L675.2 476.6" stroke="#e0e0e0" stroke-width="1.2"/>
  <path d="M689.2 475H695" stroke="#e2e2e2" stroke-width="1.2"/>
  <path d="M752.2 475H758.2M755.2 472V478" stroke="#e6e6e6" stroke-width="1.3"/>
</g>

<g id="galleryextra" fill="none" stroke="#d8d8d8">
  <path d="M694.2 95.6L697.1 98.5L700 95.6" stroke="#e0e0e0" stroke-width="1.3"/>
  <path d="M717.2 86.6A3.4 3.4 0 0 0 716.4 92.4" stroke-width="1.1"/>
  <path d="M714.6 91.2L716.6 92.6L715.4 94.4" stroke-width="1"/>
  <text x="717.2" y="88.8" font-size="4.6" font-family="Liberation Sans" font-weight="bold" fill="#dcdcdc" stroke="none">A</text>
  <text x="719.2" y="93.8" font-size="4.6" font-family="Liberation Sans" font-weight="bold" fill="#dcdcdc" stroke="none">B</text>
  <rect x="713.6" y="101" width="8.4" height="9.4" stroke-width="0.9" stroke-dasharray="1.2 0.9"/>
  <path d="M717.4 103.6L722.8 108.2L720.2 108.6L721.4 111.2L720.2 111.8L719 109.2L717.4 111Z" fill="#e0e0e0" stroke="#2a2a2a" stroke-width="0.5"/>
</g>
</svg>
</div>
<div class="a" style="left:33px;top:22px;width:734px;height:460px;border-radius:7px;border:1px solid rgba(255,255,255,0.22);box-shadow:inset 0 1px 0 rgba(255,255,255,0.14);z-index:5"></div>
</body></html>
